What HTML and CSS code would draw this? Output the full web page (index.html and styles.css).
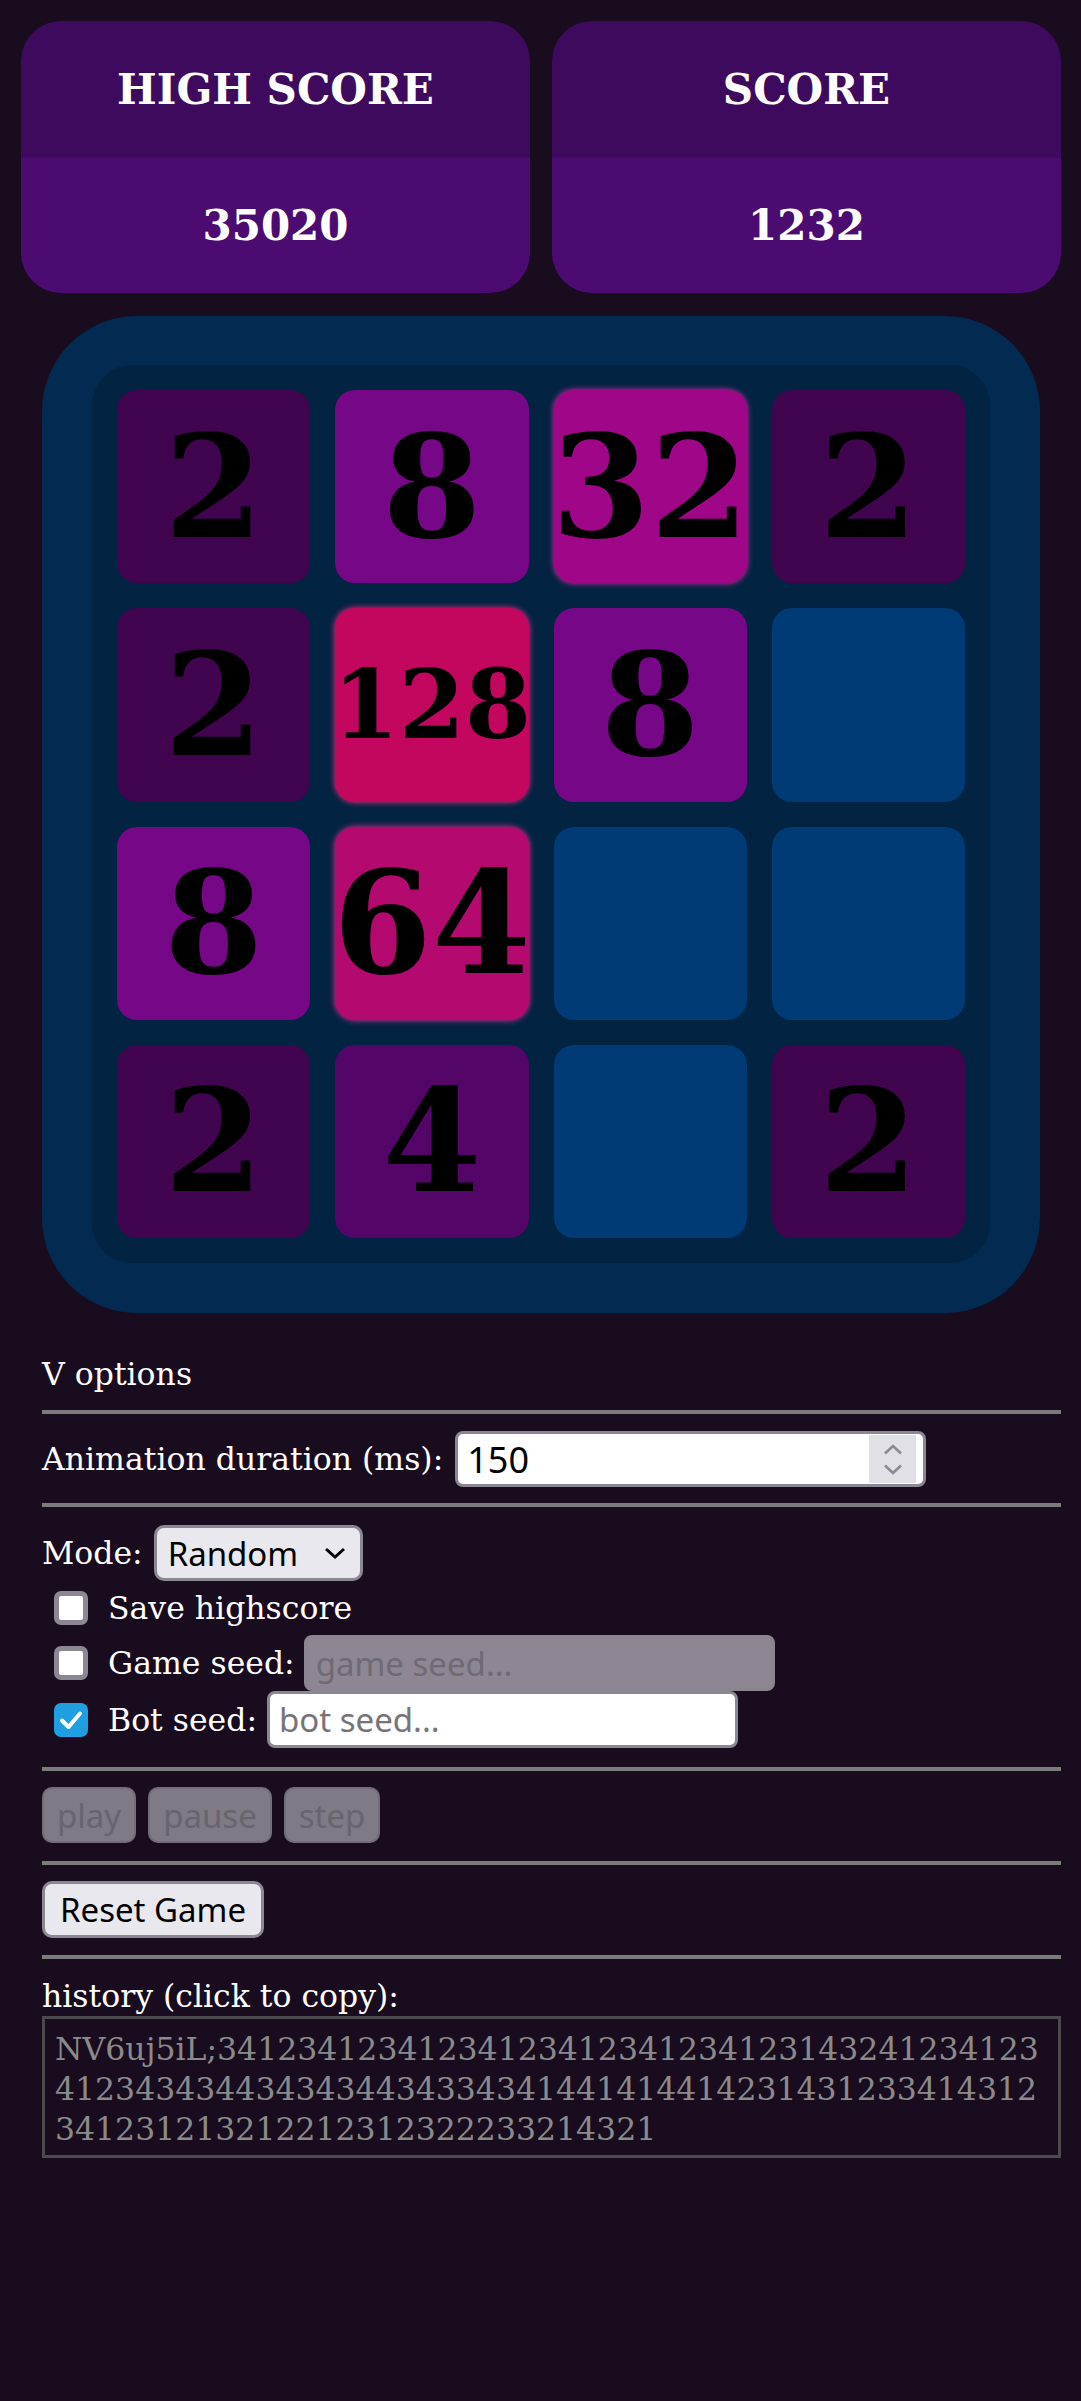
FILE: index.html
```html
<!DOCTYPE html>
<html lang="en">
<head>
<meta charset="utf-8">
<title>2048</title>
<link rel="stylesheet" href="styles.css">
</head>
<body>
<div class="page">
  <div class="scores">
    <div class="score-box">
      <div class="score-title">HIGH SCORE</div>
      <div class="score-value">35020</div>
    </div>
    <div class="score-box">
      <div class="score-title">SCORE</div>
      <div class="score-value">1232</div>
    </div>
  </div>

  <div class="board">
    <div class="grid">
      <div class="tile t2">2</div>
      <div class="tile t8">8</div>
      <div class="tile t32">32</div>
      <div class="tile t2">2</div>

      <div class="tile t2">2</div>
      <div class="tile t128 small">128</div>
      <div class="tile t8">8</div>
      <div class="tile empty"></div>

      <div class="tile t8">8</div>
      <div class="tile t64">64</div>
      <div class="tile empty"></div>
      <div class="tile empty"></div>

      <div class="tile t2">2</div>
      <div class="tile t4">4</div>
      <div class="tile empty"></div>
      <div class="tile t2">2</div>
    </div>
  </div>

  <div class="options">
    <div class="summary">V options</div>
    <div class="sep"></div>

    <div class="section sec-anim">
      <span class="label">Animation duration (ms):</span>
      <div class="num-field">
        <input class="num-input" type="text" value="150">
        <span class="spin">
          <svg width="20" height="11" viewBox="0 0 20 11"><path d="M2 9.5 L10 2 L18 9.5" fill="none" stroke="#8c8894" stroke-width="2.6"/></svg>
          <svg width="20" height="11" viewBox="0 0 20 11"><path d="M2 1.5 L10 9 L18 1.5" fill="none" stroke="#8c8894" stroke-width="2.6"/></svg>
        </span>
      </div>
    </div>

    <div class="sep"></div>

    <div class="section sec-mode">
      <div class="row mode-row">
        <span class="label">Mode:</span>
        <div class="select-wrap">
          <select class="select"><option>Random</option></select>
          <svg class="chev" width="22" height="12" viewBox="0 0 22 12"><path d="M2 2 L11 10 L20 2" fill="none" stroke="#000" stroke-width="3"/></svg>
        </div>
      </div>
      <div class="row check-row save-row">
        <span class="cb"></span>
        <span class="label">Save highscore</span>
      </div>
      <div class="row check-row">
        <span class="cb"></span>
        <span class="label">Game seed:</span>
        <input class="text-input disabled" type="text" placeholder="game seed..." disabled>
      </div>
      <div class="row check-row bot-row">
        <span class="cb checked">
          <svg width="24" height="20" viewBox="0 0 24 20"><path d="M3 10.5 L9.5 17 L21 3.5" fill="none" stroke="#fff" stroke-width="4" stroke-linecap="round" stroke-linejoin="round"/></svg>
        </span>
        <span class="label">Bot seed:</span>
        <input class="text-input" type="text" placeholder="bot seed...">
      </div>
    </div>

    <div class="sep"></div>

    <div class="section sec-bot">
      <button class="btn off" disabled>play</button>
      <button class="btn off" disabled>pause</button>
      <button class="btn off" disabled>step</button>
    </div>

    <div class="sep"></div>

    <div class="section sec-reset">
      <button class="btn reset">Reset Game</button>
    </div>

    <div class="sep"></div>

    <div class="history-label">history (click to copy):</div>
    <div class="history">NV6uj5iL;341234123412341234123412341231432412341234123434344343434434334341441414414231431233414312341231213212212312322233214321</div>
  </div>
</div>
</body>
</html>
```

FILE: styles.css
```css
html, body {
  margin: 0;
  padding: 0;
  background: #190c1f;
}

body {
  font-family: "DejaVu Serif", serif;
  color: #ffffff;
}

.page {
  padding: 21px 20px 60px 21px;
}

/* scores */
.scores {
  display: flex;
  gap: 22px;
}

.score-box {
  flex: 1;
  border-radius: 40px;
  overflow: hidden;
  font-weight: bold;
  font-size: 42px;
  text-align: center;
}

.score-title {
  height: 137px;
  background: #3d0a5d;
  display: flex;
  align-items: center;
  justify-content: center;
}

.score-value {
  height: 135px;
  background: #4b0b70;
  display: flex;
  align-items: center;
  justify-content: center;
}

/* board */
.board {
  margin: 23px 21px 0 21px;
  padding: 49px 50px 50px 50px;
  background: #032a50;
  border-radius: 95px;
}

.grid {
  display: grid;
  grid-template-columns: repeat(4, minmax(0, 1fr));
  gap: 25px;
  padding: 25px;
  background: #022342;
  border-radius: 40px;
}

.tile {
  aspect-ratio: 1 / 1;
  min-width: 0;
  border-radius: 20px;
  display: flex;
  align-items: center;
  justify-content: center;
  font-weight: bold;
  font-size: 142px;
  line-height: 1;
  color: #000;
  white-space: nowrap;
}

.tile.small { font-size: 95px; }

.empty { background: #003b76; }
.t2 { background: #410550; }
.t4 { background: #530668; }
.t8 { background: #760786; }
.t32 { background: #a00788; box-shadow: 0 0 6px #e02aa8; }
.t64 { background: #b4096f; box-shadow: 0 0 6px #ee2c96; }
.t128 { background: #c3075f; box-shadow: 0 0 6px #f42c86; }

/* options */
.options {
  margin-left: 21px;
  font-size: 31.5px;
  line-height: 40px;
}

.summary {
  padding-top: 41px;
  padding-bottom: 16px;
}

.sep {
  height: 4px;
  background: #7b7b7b;
}

.section {
  display: flex;
}

.sec-anim {
  align-items: center;
  gap: 12px;
  padding: 17px 0 16px 0;
}

.num-field {
  width: 471px;
  height: 56px;
  box-sizing: border-box;
  border: 3px solid #8b8793;
  border-radius: 8px;
  background: #ffffff;
  display: flex;
  align-items: stretch;
}

.num-input {
  flex: 1;
  min-width: 0;
  border: none;
  outline: none;
  background: transparent;
  font-family: "Noto Sans", sans-serif;
  font-size: 36px;
  color: #000;
  padding: 0 0 0 9px;
}

.spin {
  width: 47px;
  margin: 1px 7px 1px 0;
  background: #e1e0e6;
  display: flex;
  flex-direction: column;
  align-items: center;
  justify-content: center;
  gap: 9px;
}

.spin svg { display: block; }

.sec-mode {
  flex-direction: column;
  padding: 18px 0 19px 0;
}

.row {
  display: flex;
  align-items: center;
}

.mode-row {
  height: 56px;
  gap: 11px;
}

.select-wrap {
  position: relative;
  width: 209px;
  height: 56px;
}

.select {
  appearance: none;
  -webkit-appearance: none;
  width: 100%;
  height: 100%;
  box-sizing: border-box;
  border: 3px solid #8b8793;
  border-radius: 10px;
  background: #e9e8ee;
  font-family: "Noto Sans", sans-serif;
  font-size: 33px;
  color: #000;
  padding: 0 0 0 11px;
  margin: 0;
}

.chev {
  position: absolute;
  left: 170px;
  top: 22px;
  pointer-events: none;
}

.check-row {
  height: 56px;
}

.save-row { height: 54px; }
.bot-row { height: 57px; }

.cb {
  width: 34px;
  height: 34px;
  box-sizing: border-box;
  border: 5px solid #8b8793;
  border-radius: 7px;
  background: #ffffff;
  margin: 0 20px 0 12px;
  flex: none;
  display: flex;
  align-items: center;
  justify-content: center;
}

.cb.checked {
  background: #1f9fe2;
  border-color: #1f9fe2;
}

.cb svg { display: block; }

.text-input {
  width: 471px;
  height: 56px;
  box-sizing: border-box;
  border: 3px solid #8b8793;
  border-radius: 8px;
  background: #ffffff;
  font-family: "Noto Sans", sans-serif;
  font-size: 33px;
  color: #000;
  padding: 0 9px;
  margin: 0 0 0 9px;
  outline: none;
}

.text-input::placeholder { color: #777377; }

.text-input.disabled {
  background: #8e8793;
  border-color: #8b8590;
}

.text-input.disabled::placeholder { color: #6f6a74; }

.bot-row .text-input { height: 57px; margin-left: 10px; }

.sec-bot {
  gap: 12px;
  padding: 16px 0 18px 0;
}

.btn {
  height: 56px;
  box-sizing: border-box;
  font-family: "Noto Sans", sans-serif;
  font-size: 33px;
  line-height: 1;
  border-radius: 10px;
  padding: 0 14px;
  margin: 0;
}

.btn.off {
  background: #7f7a85;
  border: 2px solid #726d78;
  color: #69646e;
  padding: 0 13px;
}

.sec-reset {
  padding: 16px 0 17px 0;
}

.btn.reset {
  height: 57px;
  background: #e9e8ee;
  border: 3px solid #8b8793;
  color: #000;
  padding: 0 15px;
}

.history-label {
  padding-top: 17px;
}

.history {
  border: 3px solid #4b4a4d;
  padding: 10px 10px 6px 10px;
  font-size: 31.5px;
  line-height: 40px;
  color: #8a8a8a;
  word-break: break-all;
}
```
